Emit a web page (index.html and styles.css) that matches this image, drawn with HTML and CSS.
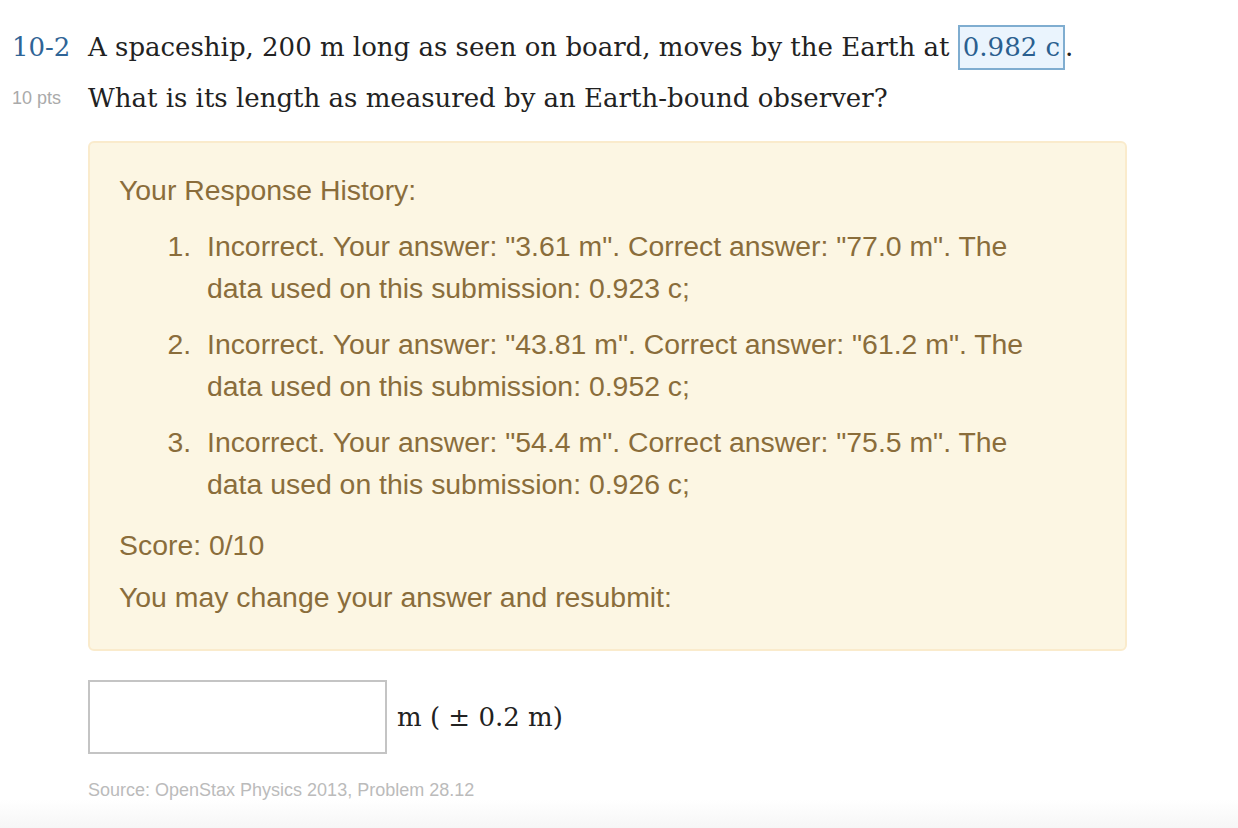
FILE: index.html
```html
<!DOCTYPE html>
<html>
<head>
<meta charset="utf-8">
<link rel="stylesheet" href="styles.css">
</head>
<body>
<div class="page">
  <div class="question">
    <div class="meta">
      <div class="qnum">10-2</div>
      <div class="pts">10 pts</div>
    </div>
    <div class="body">
      <p class="prompt">A spaceship, 200 m long as seen on board, moves by the Earth at <span class="var">0.982 c</span>.<br>What is its length as measured by an Earth-bound observer?</p>
      <div class="alert">
        <p class="hist-title">Your Response History:</p>
        <ol class="hist">
          <li>Incorrect. Your answer: "3.61 m". Correct answer: "77.0 m". The data used on this submission: 0.923 c;</li>
          <li>Incorrect. Your answer: "43.81 m". Correct answer: "61.2 m". The data used on this submission: 0.952 c;</li>
          <li>Incorrect. Your answer: "54.4 m". Correct answer: "75.5 m". The data used on this submission: 0.926 c;</li>
        </ol>
        <p class="score">Score: 0/10</p>
        <p class="resub">You may change your answer and resubmit:</p>
      </div>
      <div class="answer">
        <input class="ans-input" type="text">
        <span class="unit">m ( ± 0.2 m)</span>
      </div>
      <p class="source">Source: OpenStax Physics 2013, Problem 28.12</p>
    </div>
  </div>
  <div class="fade"></div>
</div>
</body>
</html>
```
FILE: styles.css
```css
html, body {
  margin: 0;
  padding: 0;
  background: #fff;
}
.page {
  width: 1238px;
  height: 828px;
  position: relative;
  overflow: hidden;
}
.question {
  display: flex;
  padding: 22px 0 0 12px;
}
.meta {
  width: 76px;
  flex: none;
}
.qnum {
  font-family: "DejaVu Serif", serif;
  font-size: 26px;
  line-height: 51px;
  color: #2f6496;
}
.pts {
  font-family: "Liberation Sans", Arial, sans-serif;
  font-size: 18px;
  line-height: 51px;
  color: #aaa;
}
.body {
  width: 1039px;
}
.prompt {
  margin: 0;
  font-family: "DejaVu Serif", serif;
  font-size: 26px;
  line-height: 51px;
  color: #222;
}
.var {
  display: inline-block;
  line-height: 41px;
  padding: 0 3px;
  background: #eaf4fd;
  border: 2px solid #7fadd0;
  color: #2a5f8f;
}
.alert {
  margin-top: 17px;
  background: #fcf6e3;
  border: 2px solid #faebcc;
  border-radius: 6px;
  color: #8a6d3b;
  font-family: "Liberation Sans", Arial, sans-serif;
  font-size: 28.4px;
  padding: 26px 29px 26px;
}
.hist-title {
  margin: 0 0 14px;
  line-height: 42px;
}
.hist {
  margin: 0;
  padding: 0 0 0 80px;
  line-height: 42px;
  width: 848px;
}
.hist li {
  margin-bottom: 14px;
  padding-left: 8px;
}
.score {
  margin: 0;
  line-height: 52px;
}
.resub {
  margin: 0;
  line-height: 52px;
}
.answer {
  margin-top: 29px;
  display: flex;
  align-items: center;
}
.ans-input {
  width: 295px;
  height: 70px;
  box-sizing: content-box;
  padding: 0;
  margin: 0;
  border: 2px solid #c4c4c4;
  background: #fff;
}
.unit {
  margin-left: 10px;
  font-family: "DejaVu Serif", serif;
  font-size: 26px;
  color: #222;
}
.source {
  margin: 26px 0 0;
  font-family: "Liberation Sans", Arial, sans-serif;
  font-size: 18px;
  color: #bbb;
}
.fade {
  position: absolute;
  left: 0;
  right: 0;
  bottom: 0;
  height: 28px;
  background: linear-gradient(#fff, #f6f6f6);
}
```
